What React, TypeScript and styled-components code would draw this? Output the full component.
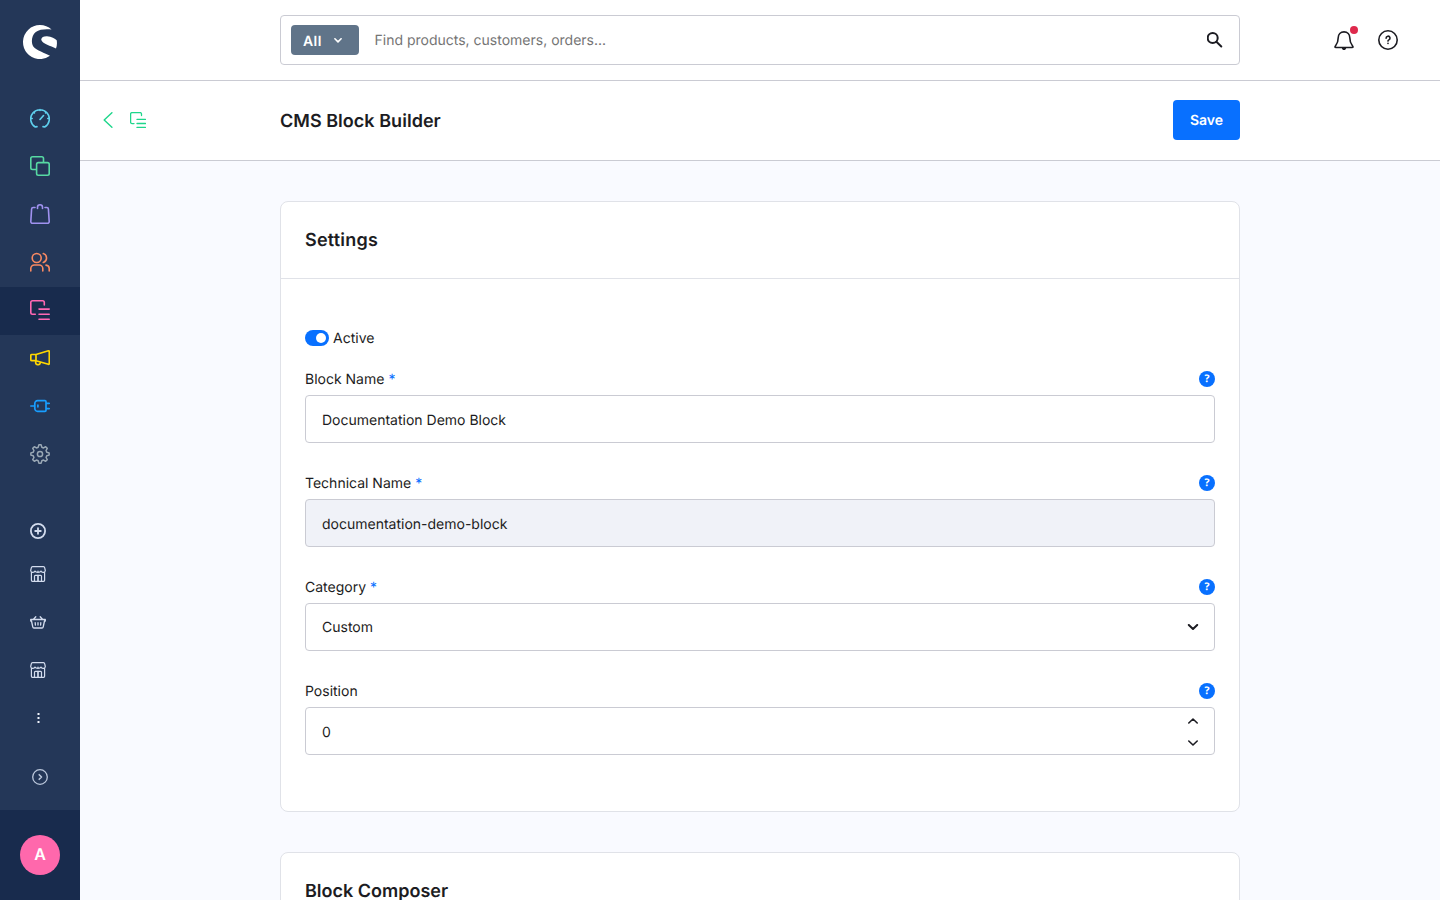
import React from "react";
import styled, { createGlobalStyle } from "styled-components";

const GlobalStyle = createGlobalStyle`
  *, *::before, *::after { box-sizing: border-box; }
  html, body { margin: 0; padding: 0; height: 100%; overflow: hidden; }
  body {
    font-family: "Inter", "Liberation Sans", sans-serif;
    font-size: 14px;
    color: #1c1c22;
    background: #f9faff;
    -webkit-font-smoothing: antialiased;
    text-rendering: geometricPrecision;
  }
  button, input { font: inherit; color: inherit; text-rendering: inherit; }
`;

const Shell = styled.div`
  display: flex;
  height: 100vh;
  overflow: hidden;
`;

/* ---------- sidebar ---------- */

const Sidebar = styled.aside`
  display: flex;
  flex-direction: column;
  flex: 0 0 80px;
  background: #243758;
`;

const LogoBox = styled.div`
  display: flex;
  justify-content: center;
  height: 95px;
  padding-top: 25px;
`;

const MainNav = styled.nav`
  display: flex;
  flex-direction: column;
`;

const NavItem = styled.a<{ $color: string; $active?: boolean }>`
  display: flex;
  align-items: center;
  height: 48px;
  padding: 0 0 2px 30px;
  color: ${(p) => p.$color};
  background: ${(p) => (p.$active ? "#182b4d" : "transparent")};
`;

const PluginNav = styled.nav`
  display: flex;
  flex-direction: column;
  margin-top: 33px;
`;

const PluginItem = styled.a<{ $height: number }>`
  display: flex;
  align-items: center;
  height: ${(p) => p.$height}px;
  padding-left: 30px;
  color: #d3dcee;
`;

const ExpandItem = styled.button`
  display: flex;
  align-items: center;
  justify-content: center;
  height: 66px;
  margin-top: auto;
  padding: 0;
  border: 0;
  background: none;
  color: #bcc8dc;
`;

const UserBox = styled.div`
  display: flex;
  align-items: center;
  justify-content: center;
  height: 90px;
  background: #182b4d;
`;

const Avatar = styled.div`
  width: 40px;
  height: 40px;
  border-radius: 50%;
  background: #ff68ac;
  color: #fff;
  font-size: 16px;
  font-weight: 600;
  line-height: 39px;
  text-align: center;
`;

/* ---------- top bars ---------- */

const Main = styled.div`
  display: flex;
  flex-direction: column;
  flex: 1;
  min-width: 0;
`;

const Bar = styled.header`
  display: grid;
  grid-template-columns: 200px 960px 1fr;
  align-items: center;
  flex: none;
  background: #fff;
  border-bottom: 1px solid #cacbd3;
`;

const TopBar = styled(Bar)`
  height: 81px;
`;

const PageBar = styled(Bar)`
  height: 80px;
  padding-bottom: 1px;
`;

const SearchBox = styled.div`
  grid-column: 2;
  display: flex;
  align-items: center;
  height: 50px;
  padding: 0 16px 0 10px;
  border: 1px solid #cacbd3;
  border-radius: 4px;
`;

const ScopeButton = styled.button`
  display: flex;
  align-items: center;
  gap: 12px;
  width: 68px;
  height: 30px;
  padding: 0 0 0 12px;
  border: 0;
  border-radius: 4px;
  background: #607489;
  color: #fff;
  font-weight: 600;
  letter-spacing: 0.4px;
  line-height: 18px;
  > span { padding-top: 4px; }
  > svg { margin-top: 1px; }
`;

const SearchInput = styled.input`
  flex: 1;
  margin-left: 15.5px;
  padding: 0;
  border: 0;
  outline: 0;
  background: none;
  &::placeholder { color: #757575; opacity: 1; }
`;

const Actions = styled.div`
  display: flex;
  align-items: center;
  justify-content: flex-end;
  gap: 24px;
  padding-right: 42px;
`;

const ActionButton = styled.button`
  position: relative;
  display: flex;
  width: 20px;
  height: 20px;
  padding: 0;
  border: 0;
  background: none;
`;

const NotificationDot = styled.span`
  position: absolute;
  top: -4px;
  right: -4px;
  width: 8px;
  height: 8px;
  border-radius: 50%;
  background: #de294c;
`;

const BackLinks = styled.div`
  display: flex;
  align-items: center;
  gap: 16px;
  padding-left: 23px;
  color: #1ed68b;
`;

const TitleRow = styled.div`
  display: flex;
  align-items: center;
  justify-content: space-between;
`;

const PageTitle = styled.h2`
  margin: 0;
  padding-top: 3px;
  font-size: 18px;
  font-weight: 600;
  line-height: 24px;
  letter-spacing: 0.03px;
`;

const SaveButton = styled.button`
  width: 67px;
  height: 40px;
  padding: 0;
  border: 0;
  border-radius: 4px;
  background: #0870ff;
  color: #fff;
  font-weight: 600;
`;

/* ---------- content ---------- */

const Content = styled.main`
  display: flex;
  flex-direction: column;
  gap: 40px;
  flex: 1;
  min-height: 0;
  padding: 40px 200px 0;
  overflow: hidden;
`;

const Card = styled.section`
  flex: none;
  border: 1px solid #e0e2e8;
  border-radius: 8px;
  background: #fff;
`;

const CardTitle = styled.h3<{ $tracking?: number }>`
  margin: 0;
  height: 77px;
  padding: 0 24px;
  border-bottom: 1px solid #e0e2e8;
  font-size: 18px;
  font-weight: 600;
  line-height: 78px;
  letter-spacing: ${(p) => p.$tracking ?? 0}px;
`;

const CardBody = styled.div`
  display: flex;
  flex-direction: column;
  padding: 51px 24px 56px;
`;

const SwitchRow = styled.label`
  display: flex;
  align-items: center;
  gap: 4px;
  height: 16px;
  margin-bottom: 25px;
  line-height: 18px;
`;

const Toggle = styled.span`
  display: flex;
  justify-content: flex-end;
  align-items: center;
  width: 24px;
  height: 16px;
  padding-right: 3px;
  border-radius: 8px;
  background: #0870ff;
  &::after {
    content: "";
    width: 10px;
    height: 10px;
    border-radius: 50%;
    background: #fff;
  }
`;

const SwitchText = styled.span`
  padding-top: 2px;
`;

const FieldStack = styled.div`
  display: flex;
  flex-direction: column;
  gap: 32px;
`;

const FieldBox = styled.div`
  display: flex;
  flex-direction: column;
  gap: 8px;
`;

const LabelRow = styled.div`
  display: flex;
  align-items: flex-start;
  justify-content: space-between;
  height: 16px;
  line-height: 18px;
`;

const Required = styled.span`
  margin-left: 4px;
  color: #0870ff;
`;

const HelpBadge = styled.span`
  width: 16px;
  height: 16px;
  border-radius: 50%;
  background: #0870ff;
  color: #fff;
  font-family: "Noto Sans", "Open Sans", sans-serif;
  font-size: 10.5px;
  font-weight: 700;
  line-height: 16px;
  text-align: center;
`;

const Control = styled.div<{ $disabled?: boolean; $lift?: boolean }>`
  display: flex;
  align-items: center;
  justify-content: space-between;
  height: 48px;
  padding: 0 15px 0 16px;
  border: 1px solid #cacbd3;
  border-radius: 4px;
  background: ${(p) => (p.$disabled ? "#f0f2f8" : "#fff")};
  line-height: 16px;
  > span { padding-top: ${(p) => (p.$lift ? 2 : 4)}px; }
`;

const Stepper = styled.div`
  display: flex;
  flex-direction: column;
  gap: 16px;
  margin-top: 1px;
`;

/* ---------- icons ---------- */

type IconProps = { size?: number; width?: number; children: React.ReactNode };

const Icon = ({ size = 20, width = 1.6, children }: IconProps) => (
  <svg
    width={size}
    height={size}
    viewBox={`0 0 ${size} ${size}`}
    fill="none"
    stroke="currentColor"
    strokeWidth={width}
    strokeLinecap="round"
    strokeLinejoin="round"
  >
    {children}
  </svg>
);

const Logo = () => (
  <svg width="34" height="34" viewBox="0 0 34 34" fill="#fff">
    <path d="M28.600 4.600A17 17 0 1 0 27 30.800C22 28 13.500 25.500 10.300 21.500C8 18 8.300 10.500 12.800 7C16.500 4.300 23 4 28.600 4.600Z" />
    <path d="M33 23.400C27.500 20.800 20 19 18.300 15C17.900 12.500 20.500 11.100 24 11.200C28.500 11.400 32 13.500 33.700 15.300C34.200 18 34 21 33 23.400Z" />
  </svg>
);

const GaugeIcon = () => (
  <Icon>
    <path d="M7 18.600 5.300 19A9.300 9.300 0 1 1 14.700 19L13 18.600M1 10.500h1.200M17.800 10.500H19M10 1.500v1M3.800 4.300l.6.6M16.200 4.300l-.6.6M10 11.500l3.500-4" />
  </Icon>
);

const CopyIcon = () => (
  <Icon>
    <path d="M13.500 6V2.500a1.700 1.700 0 0 0-1.700-1.700H2.500A1.700 1.700 0 0 0 .8 2.500v9.300a1.700 1.700 0 0 0 1.700 1.700H6" />
    <rect x="6.600" y="6.600" width="12.600" height="12.600" rx="1.700" />
  </Icon>
);

const BagIcon = () => (
  <Icon>
    <path d="M5 3.500H3.200a1.600 1.600 0 0 0-1.600 1.500L.8 17.600a1.600 1.600 0 0 0 1.600 1.700h15.200a1.600 1.600 0 0 0 1.600-1.700L18.400 5a1.600 1.600 0 0 0-1.600-1.500H15M7.500 4.400V3.300a2.500 2.500 0 0 1 5 0v1.100" />
  </Icon>
);

const UsersIcon = () => (
  <Icon>
    <circle cx="6.700" cy="6" r="4.500" />
    <path d="M13.300 1.600a4.600 4.600 0 0 1 0 8.800M.8 19v-2.400a3.600 3.600 0 0 1 3.600-3.600h4.800a3.600 3.600 0 0 1 3.600 3.600V19M16 13.100a3.600 3.600 0 0 1 3.200 3.500V19" />
  </Icon>
);

const ContentIcon = () => (
  <Icon>
    <path d="M14.300 5V2.500a1.700 1.700 0 0 0-1.700-1.700H2.500A1.700 1.700 0 0 0 .8 2.500v10.100a1.700 1.700 0 0 0 1.700 1.700h2.800M9 9.100h10.200M9 14.200h10.200M9 19.200h10.200" />
  </Icon>
);

const MegaphoneIcon = () => (
  <Icon width={1.7}>
    <path d="M6 6.500 18.400 2.800a.8.800 0 0 1 .9.800v11.900a.8.800 0 0 1-.9.800L6 12.700M6 6.500v6.200M6 6.500H1.800a1 1 0 0 0-1 1v4.200a1 1 0 0 0 1 1H6M5.700 13v1.800a1.800 1.800 0 0 0 1.800 1.800h.9a1.800 1.800 0 0 0 1.800-1.800V14" />
  </Icon>
);

const PlugIcon = () => (
  <Icon width={1.7}>
    <path d="M.8 10h4M15 15.300H7.500A2.700 2.700 0 0 1 4.800 12.600V7.400A2.700 2.700 0 0 1 7.500 4.700H15a1 1 0 0 1 1 1v8.600a1 1 0 0 1-1 1M16 7.300h3.200M16 12.700h3.200M7.900 9.200v1.600" />
  </Icon>
);

const gearOutline = (() => {
  const points: string[] = [];
  const at = (deg: number, r: number) => {
    const a = (deg * Math.PI) / 180;
    return `${(10 + r * Math.cos(a)).toFixed(2)} ${(10 + r * Math.sin(a)).toFixed(2)}`;
  };
  for (let i = 0; i < 8; i++) {
    const t = i * 45;
    points.push(at(t - 15, 7), at(t - 7, 9.2), at(t + 7, 9.2), at(t + 15, 7));
  }
  return `M${points.join("L")}Z`;
})();

const GearIcon = () => (
  <Icon width={1.5}>
    <path d={gearOutline} />
    <circle cx="10" cy="10" r="2.600" />
  </Icon>
);

const PlusCircleIcon = () => (
  <Icon size={16} width={1.8}>
    <circle cx="8" cy="8" r="7.100" />
    <path d="M8 5.200v5.600M5.200 8h5.600" />
  </Icon>
);

const StoreIcon = () => (
  <Icon size={16} width={1.2}>
    <path d="M1.400 6.500V14.300a1 1 0 0 0 1 1h11.200a1 1 0 0 0 1-1V6.500M.7 4.500 1.300 1.800A1.300 1.300 0 0 1 2.600.7h10.800a1.300 1.300 0 0 1 1.300 1.100l.6 2.700c0 2.300-3.600 2.600-4.300.5-.7 1.800-5.300 1.800-6 0C4.300 7.100.7 6.800.7 4.500ZM8 5v1M4.500 15.200V10.300a.9.900 0 0 1 .9-.9h5.200a.9.900 0 0 1 .9.900v4.900" />
    <path d="M8 9.500v5.700" strokeWidth="1.700" />
  </Icon>
);

const BasketIcon = () => (
  <Icon size={16} width={1.3}>
    <path d="M.7 5.500h14.600v1.500h-.8l-1.300 6a1.200 1.200 0 0 1-1.200 1H4a1.200 1.200 0 0 1-1.200-1l-1.300-6H.7ZM3.500 5.300 5.800 2.700M12.500 5.300 10.200 2.700M5.200 8.700l.2 2.300M8 8.700V11M10.800 8.700l-.2 2.300" />
  </Icon>
);

const DotsIcon = () => (
  <Icon size={16} width={0}>
    <g fill="#eef2fa">
      <rect x="7.500" y="3" width="2" height="2" />
      <rect x="7.500" y="7" width="2" height="2" />
      <rect x="7.500" y="11" width="2" height="2" />
    </g>
  </Icon>
);

const ExpandIcon = () => (
  <Icon size={16} width={1.3}>
    <circle cx="8" cy="8" r="7.300" />
    <path d="m7.200 5.700 2.300 2.300-2.300 2.300" strokeWidth="1.600" />
  </Icon>
);

const Chevron = ({ up = false, width = 1.6 }: { up?: boolean; width?: number }) => (
  <svg width="12" height="6" viewBox="0 0 12 6" fill="none" stroke="currentColor" strokeWidth={width} strokeLinecap="round" strokeLinejoin="round">
    <path d={up ? "M1.800 5 6 1l4.200 4" : "M1.800 1 6 5l4.200-4"} />
  </svg>
);

const ScopeChevron = () => (
  <svg width="8" height="5" viewBox="0 0 8 5" fill="none" stroke="currentColor" strokeWidth="1.600" strokeLinecap="round" strokeLinejoin="round">
    <path d="M.9.8 4 3.900 7.100.8" />
  </svg>
);

const SearchIcon = () => (
  <Icon size={16} width={2}>
    <circle cx="5.700" cy="6" r="5" />
    <path d="m9.400 9.800 4.900 4.700" />
  </Icon>
);

const BellIcon = () => (
  <Icon width={1.6}>
    <path d="M10 1.900C6.500 1.900 4.300 4.400 4.200 7.700c0 4.800-1 6.100-2.600 8-1 1.300-.8 1.800.4 1.800h16c1.200 0 1.400-.5.4-1.800-1.600-1.900-2.600-3.200-2.600-8-.1-3.300-2.300-5.800-5.800-5.800Z" />
    <path d="M8.700 18.500 10 19.800l1.300-1.300Z" />
  </Icon>
);

const HelpIcon = () => (
  <Icon width={1.6}>
    <circle cx="10" cy="10" r="9.200" />
    <path d="M8.100 8.200a1.950 1.950 0 1 1 2.800 1.700c-.6.300-.9.600-.9 1.200M10 13.300v.1" />
  </Icon>
);

const BackIcon = () => (
  <svg width="11" height="16" viewBox="0 0 11 16" fill="none" stroke="currentColor" strokeWidth="1.400" strokeLinecap="round" strokeLinejoin="round">
    <path d="M8.900.7 1.200 8l7.700 7.300" />
  </svg>
);

const SmallContentIcon = () => (
  <Icon size={16} width={1.3}>
    <path d="M11.500 3.600V2A1.400 1.400 0 0 0 10.100.6H2A1.400 1.400 0 0 0 .6 2v8.200a1.400 1.400 0 0 0 1.400 1.400h2M7 7.400h8.500M7 11.500h8.500M7 15.400h8.500" />
  </Icon>
);

/* ---------- page ---------- */

const mainNav = [
  { id: "dashboard", color: "#5fd0ee", icon: <GaugeIcon /> },
  { id: "catalogues", color: "#57d9a3", icon: <CopyIcon /> },
  { id: "orders", color: "#a092f0", icon: <BagIcon /> },
  { id: "customers", color: "#f88962", icon: <UsersIcon /> },
  { id: "content", color: "#ff68b4", icon: <ContentIcon />, active: true },
  { id: "marketing", color: "#ffd700", icon: <MegaphoneIcon /> },
  { id: "extensions", color: "#189eff", icon: <PlugIcon /> },
  { id: "settings", color: "#9aa8b5", icon: <GearIcon /> },
];

const pluginNav = [
  { id: "add", height: 38, icon: <PlusCircleIcon /> },
  { id: "storefront", height: 48, icon: <StoreIcon /> },
  { id: "basket", height: 48, icon: <BasketIcon /> },
  { id: "headless", height: 48, icon: <StoreIcon /> },
  { id: "more", height: 48, icon: <DotsIcon /> },
];

type FieldProps = {
  label: string;
  value: string;
  required?: boolean;
  disabled?: boolean;
  lift?: boolean;
  suffix?: React.ReactNode;
};

const Field = ({ label, value, required, disabled, lift, suffix }: FieldProps) => (
  <FieldBox>
    <LabelRow>
      <span>
        {label}
        {required && <Required>*</Required>}
      </span>
      <HelpBadge>?</HelpBadge>
    </LabelRow>
    <Control $disabled={disabled} $lift={lift}>
      <span>{value}</span>
      {suffix}
    </Control>
  </FieldBox>
);

export default function App() {
  return (
    <>
      <GlobalStyle />
      <Shell>
        <Sidebar>
          <LogoBox>
            <Logo />
          </LogoBox>
          <MainNav>
            {mainNav.map((n) => (
              <NavItem key={n.id} $color={n.color} $active={n.active}>
                {n.icon}
              </NavItem>
            ))}
          </MainNav>
          <PluginNav>
            {pluginNav.map((n) => (
              <PluginItem key={n.id} $height={n.height}>
                {n.icon}
              </PluginItem>
            ))}
          </PluginNav>
          <ExpandItem>
            <ExpandIcon />
          </ExpandItem>
          <UserBox>
            <Avatar>A</Avatar>
          </UserBox>
        </Sidebar>
        <Main>
          <TopBar>
            <SearchBox>
              <ScopeButton>
                <span>All</span>
                <ScopeChevron />
              </ScopeButton>
              <SearchInput placeholder="Find products, customers, orders..." />
              <SearchIcon />
            </SearchBox>
            <Actions>
              <ActionButton>
                <BellIcon />
                <NotificationDot />
              </ActionButton>
              <ActionButton>
                <HelpIcon />
              </ActionButton>
            </Actions>
          </TopBar>
          <PageBar>
            <BackLinks>
              <BackIcon />
              <SmallContentIcon />
            </BackLinks>
            <TitleRow>
              <PageTitle>CMS Block Builder</PageTitle>
              <SaveButton>Save</SaveButton>
            </TitleRow>
          </PageBar>
          <Content>
            <Card>
              <CardTitle $tracking={0.2}>Settings</CardTitle>
              <CardBody>
                <SwitchRow>
                  <Toggle />
                  <SwitchText>Active</SwitchText>
                </SwitchRow>
                <FieldStack>
                  <Field label="Block Name" value="Documentation Demo Block" required />
                  <Field label="Technical Name" value="documentation-demo-block" required disabled />
                  <Field label="Category" value="Custom" required lift suffix={<Chevron width={2} />} />
                  <Field
                    label="Position"
                    value="0"
                    suffix={
                      <Stepper>
                        <Chevron up />
                        <Chevron />
                      </Stepper>
                    }
                  />
                </FieldStack>
              </CardBody>
            </Card>
            <Card>
              <CardTitle>Block Composer</CardTitle>
            </Card>
          </Content>
        </Main>
      </Shell>
    </>
  );
}
